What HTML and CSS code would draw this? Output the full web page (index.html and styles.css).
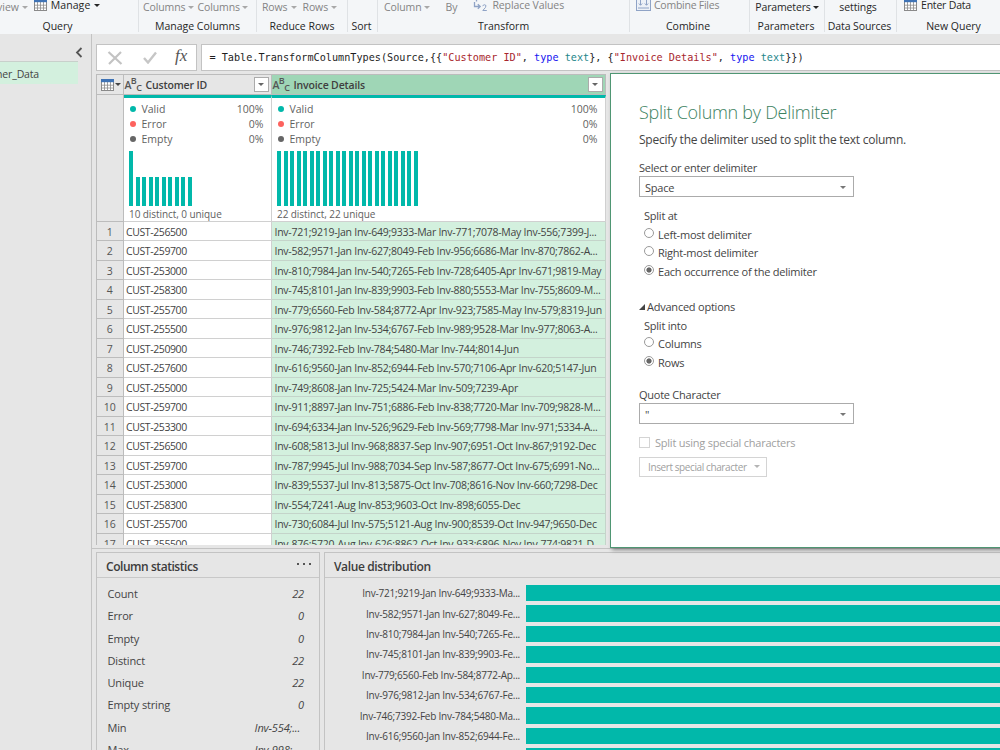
FILE: index.html
```
<!DOCTYPE html>
<html lang="en">
<head>
    <meta charset="UTF-8">
    <meta name="viewport" content="width=device-width, initial-scale=1.0">
    <title>Power Query Editor</title>
    <link rel="stylesheet" href="styles.css">
</head>
<body>
    <svg class="defs" width="0" height="0">
        <symbol id="table-icon" viewBox="0 0 13 12">
            <rect x="0.5" y="0.5" width="12" height="11" fill="#fff" stroke="#8a8a8a"/>
            <path d="M0.5 6.2H12.5M0.5 9H12.5M3.5 3V11.5M6.5 3V11.5M9.5 3V11.5" stroke="#8a8a8a" stroke-width="0.8" fill="none"/>
            <rect width="13" height="3.2" fill="#3f73b5"/>
        </symbol>
    </svg>

    <div class="ribbon">
        <div class="group g-query">
            <div class="tools"><span class="off view">view <i class="caret"></i></span><span class="tool up"><svg class="tbl"><use href="#table-icon"/></svg>Manage <i class="caret"></i></span></div>
            <div class="label">Query</div>
        </div>
        <div class="group g-columns">
            <div class="tools off"><span class="tool">Columns <i class="caret"></i></span><span class="tool">Columns <i class="caret"></i></span></div>
            <div class="label">Manage Columns</div>
        </div>
        <div class="group g-rows">
            <div class="tools off"><span class="tool">Rows <i class="caret"></i></span><span class="tool">Rows <i class="caret"></i></span></div>
            <div class="label">Reduce Rows</div>
        </div>
        <div class="group g-sort">
            <div class="tools"></div>
            <div class="label">Sort</div>
        </div>
        <div class="group g-transform">
            <div class="tools off">
                <span class="tool">Column <i class="caret"></i></span>
                <span class="tool">By</span>
                <span class="tool up">
                    <svg width="15" height="13" viewBox="0 0 15 13" fill="none" stroke="#8fa3c6"><path d="M3.5 0V2.5M1.5 3V7.5H7M4.8 5.2L7.2 7.5L4.8 9.8" stroke-width="1.3"/><path d="M9.5 6.8Q11.5 4.8 13 6.5Q13.5 8 9.8 11.5H13.8"/></svg>
                    Replace Values
                </span>
            </div>
            <div class="label">Transform</div>
        </div>
        <div class="group g-combine">
            <div class="tools off">
                <span class="tool up">
                    <svg width="15" height="13" viewBox="0 0 15 13" fill="none" stroke="#8fa3c6"><rect x="0.5" y="-3" width="14" height="14.5" fill="#edf1f7"/><path d="M4.5 0V6M2.8 4.5L4.5 6.3L6.2 4.5M10.5 0V6M8.8 4.5L10.5 6.3L12.2 4.5M2 9H13"/></svg>
                    Combine Files
                </span>
            </div>
            <div class="label">Combine</div>
        </div>
        <div class="group g-params">
            <div class="tools"><span class="tool">Parameters <i class="caret"></i></span></div>
            <div class="label">Parameters</div>
        </div>
        <div class="group g-sources">
            <div class="tools"><span class="tool">settings</span></div>
            <div class="label">Data Sources</div>
        </div>
        <div class="group g-new">
            <div class="tools"><span class="tool up"><svg class="tbl"><use href="#table-icon"/></svg>Enter Data</span></div>
            <div class="label">New Query</div>
        </div>
    </div>

    <div class="workspace">
        <div class="queries">
            <div class="collapse"><svg width="8" height="11" viewBox="0 0 8 11"><path d="M6.5 1L2 5.5L6.5 10" fill="none" stroke="#555" stroke-width="1.8"/></svg></div>
            <div class="query-item">ner_Data</div>
        </div>

        <div class="main">
            <div class="formula-row">
                <div class="formula-buttons">
                    <svg width="16" height="14" viewBox="0 0 16 14"><path d="M1.5 1L14.5 13M14 1L2 13" stroke="#c3c3c3" stroke-width="2.2"/></svg>
                    <svg width="14" height="13" viewBox="0 0 14 13"><path d="M1 7L5 11.5L13 1.5" fill="none" stroke="#c6c6c6" stroke-width="2.4"/></svg>
                    <span class="fx">fx</span>
                </div>
                <div class="formula">= Table.TransformColumnTypes(Source,{{<span class="str">"Customer ID"</span>, <span class="kw">type</span> <span class="ty">text</span>}, {<span class="str">"Invoice Details"</span>, <span class="kw">type</span> <span class="ty">text</span>}})</div>
            </div>

            <div class="grid">
                <div class="head-row">
                    <div class="corner"><svg class="tbl"><use href="#table-icon"/></svg><i class="caret"></i></div>
                    <div class="head">
                        <span class="abc">A<sup>B</sup><sub>C</sub></span><span class="name">Customer ID</span><span class="drop"><i class="caret"></i></span>
                    </div>
                    <div class="head selected">
                        <span class="abc">A<sup>B</sup><sub>C</sub></span><span class="name">Invoice Details</span><span class="drop"><i class="caret"></i></span>
                    </div>
                </div>
                <div class="profile-row">
                    <div class="num"></div>
                    <div class="profile">
                        <div class="quality"><i class="dot valid"></i>Valid<b>100%</b></div>
                        <div class="quality"><i class="dot error"></i>Error<b>0%</b></div>
                        <div class="quality"><i class="dot empty"></i>Empty<b>0%</b></div>
                        <div class="histogram"><i></i><i class="half"></i><i class="half"></i><i class="half"></i><i class="half"></i><i class="half"></i><i class="half"></i><i class="half"></i><i class="half"></i><i class="half"></i></div>
                        <div class="distinct">10 distinct, 0 unique</div>
                    </div>
                    <div class="profile">
                        <div class="quality"><i class="dot valid"></i>Valid<b>100%</b></div>
                        <div class="quality"><i class="dot error"></i>Error<b>0%</b></div>
                        <div class="quality"><i class="dot empty"></i>Empty<b>0%</b></div>
                        <div class="histogram"><i></i><i></i><i></i><i></i><i></i><i></i><i></i><i></i><i></i><i></i><i></i><i></i><i></i><i></i><i></i><i></i><i></i><i></i><i></i><i></i><i></i><i></i></div>
                        <div class="distinct">22 distinct, 22 unique</div>
                    </div>
                </div>
                <div class="row"><div class="num">1</div><div class="cell">CUST-256500</div><div class="cell inv">Inv-721;9219-Jan Inv-649;9333-Mar Inv-771;7078-May Inv-556;7399-J...</div></div>
                <div class="row"><div class="num">2</div><div class="cell">CUST-259700</div><div class="cell inv">Inv-582;9571-Jan Inv-627;8049-Feb Inv-956;6686-Mar Inv-870;7862-A...</div></div>
                <div class="row"><div class="num">3</div><div class="cell">CUST-253000</div><div class="cell inv">Inv-810;7984-Jan Inv-540;7265-Feb Inv-728;6405-Apr Inv-671;9819-May</div></div>
                <div class="row"><div class="num">4</div><div class="cell">CUST-258300</div><div class="cell inv">Inv-745;8101-Jan Inv-839;9903-Feb Inv-880;5553-Mar Inv-755;8609-M...</div></div>
                <div class="row"><div class="num">5</div><div class="cell">CUST-255700</div><div class="cell inv">Inv-779;6560-Feb Inv-584;8772-Apr Inv-923;7585-May Inv-579;8319-Jun</div></div>
                <div class="row"><div class="num">6</div><div class="cell">CUST-255500</div><div class="cell inv">Inv-976;9812-Jan Inv-534;6767-Feb Inv-989;9528-Mar Inv-977;8063-A...</div></div>
                <div class="row"><div class="num">7</div><div class="cell">CUST-250900</div><div class="cell inv">Inv-746;7392-Feb Inv-784;5480-Mar Inv-744;8014-Jun</div></div>
                <div class="row"><div class="num">8</div><div class="cell">CUST-257600</div><div class="cell inv">Inv-616;9560-Jan Inv-852;6944-Feb Inv-570;7106-Apr Inv-620;5147-Jun</div></div>
                <div class="row"><div class="num">9</div><div class="cell">CUST-255000</div><div class="cell inv">Inv-749;8608-Jan Inv-725;5424-Mar Inv-509;7239-Apr</div></div>
                <div class="row"><div class="num">10</div><div class="cell">CUST-259700</div><div class="cell inv">Inv-911;8897-Jan Inv-751;6886-Feb Inv-838;7720-Mar Inv-709;9828-M...</div></div>
                <div class="row"><div class="num">11</div><div class="cell">CUST-253300</div><div class="cell inv">Inv-694;6334-Jan Inv-526;9629-Feb Inv-569;7798-Mar Inv-971;5334-A...</div></div>
                <div class="row"><div class="num">12</div><div class="cell">CUST-256500</div><div class="cell inv">Inv-608;5813-Jul Inv-968;8837-Sep Inv-907;6951-Oct Inv-867;9192-Dec</div></div>
                <div class="row"><div class="num">13</div><div class="cell">CUST-259700</div><div class="cell inv">Inv-787;9945-Jul Inv-988;7034-Sep Inv-587;8677-Oct Inv-675;6991-No...</div></div>
                <div class="row"><div class="num">14</div><div class="cell">CUST-253000</div><div class="cell inv">Inv-839;5537-Jul Inv-813;5875-Oct Inv-708;8616-Nov Inv-660;7298-Dec</div></div>
                <div class="row"><div class="num">15</div><div class="cell">CUST-258300</div><div class="cell inv">Inv-554;7241-Aug Inv-853;9603-Oct Inv-898;6055-Dec</div></div>
                <div class="row"><div class="num">16</div><div class="cell">CUST-255700</div><div class="cell inv">Inv-730;6084-Jul Inv-575;5121-Aug Inv-900;8539-Oct Inv-947;9650-Dec</div></div>
                <div class="row"><div class="num">17</div><div class="cell">CUST-255500</div><div class="cell inv">Inv-876;5720-Aug Inv-626;8862-Oct Inv-933;6896-Nov Inv-774;9821-D...</div></div>
            </div>

            <div class="panels">
                <div class="panel stats">
                    <div class="panel-title">Column statistics<span class="more"><i></i><i></i><i></i></span></div>
                    <div class="stat"><span>Count</span><em>22</em></div>
                    <div class="stat"><span>Error</span><em>0</em></div>
                    <div class="stat"><span>Empty</span><em>0</em></div>
                    <div class="stat"><span>Distinct</span><em>22</em></div>
                    <div class="stat"><span>Unique</span><em>22</em></div>
                    <div class="stat"><span>Empty string</span><em>0</em></div>
                    <div class="stat"><span>Min</span><em class="long">Inv-554;...</em></div>
                    <div class="stat"><span>Max</span><em class="long">Inv-998;...</em></div>
                </div>
                <div class="panel distribution">
                    <div class="panel-title">Value distribution</div>
                    <div class="bar-row"><span>Inv-721;9219-Jan Inv-649;9333-Ma...</span><i></i></div>
                    <div class="bar-row"><span>Inv-582;9571-Jan Inv-627;8049-Fe...</span><i></i></div>
                    <div class="bar-row"><span>Inv-810;7984-Jan Inv-540;7265-Fe...</span><i></i></div>
                    <div class="bar-row"><span>Inv-745;8101-Jan Inv-839;9903-Fe...</span><i></i></div>
                    <div class="bar-row"><span>Inv-779;6560-Feb Inv-584;8772-Ap...</span><i></i></div>
                    <div class="bar-row"><span>Inv-976;9812-Jan Inv-534;6767-Fe...</span><i></i></div>
                    <div class="bar-row"><span>Inv-746;7392-Feb Inv-784;5480-Ma...</span><i></i></div>
                    <div class="bar-row"><span>Inv-616;9560-Jan Inv-852;6944-Fe...</span><i></i></div>
                    <div class="bar-row"><span></span><i></i></div>
                </div>
            </div>
        </div>
    </div>

    <div class="dialog">
        <h1>Split Column by Delimiter</h1>
        <p class="intro">Specify the delimiter used to split the text column.</p>
        <div class="field-label">Select or enter delimiter</div>
        <div class="select">Space<i class="caret"></i></div>
        <div class="options split-at">
            <div class="option title">Split at</div>
            <div class="option"><i class="radio"></i>Left-most delimiter</div>
            <div class="option"><i class="radio"></i>Right-most delimiter</div>
            <div class="option"><i class="radio checked"></i>Each occurrence of the delimiter</div>
        </div>
        <div class="advanced"><svg width="6" height="6" viewBox="0 0 6 6"><path d="M6 0V6H0Z" fill="#444"/></svg>Advanced options</div>
        <div class="options">
            <div class="option title">Split into</div>
            <div class="option"><i class="radio"></i>Columns</div>
            <div class="option"><i class="radio checked"></i>Rows</div>
        </div>
        <div class="field-label quote-label">Quote Character</div>
        <div class="select">"<i class="caret"></i></div>
        <div class="check"><i class="box"></i>Split using special characters</div>
        <div class="insert">Insert special character<i class="caret"></i></div>
    </div>
</body>
</html>
```
FILE: styles.css
```
* {
    box-sizing: border-box;
}
body {
    margin: 0;
    width: 1000px;
    height: 750px;
    overflow: hidden;
    background: #e6e6e6;
    color: #444;
    font-family: "Open Sans", "Noto Sans", sans-serif;
    font-size: 10.5px;
    white-space: nowrap;
    position: relative;
}
i {
    font-style: normal;
}
.defs {
    position: absolute;
}
.tbl {
    width: 13px;
    height: 12px;
    flex: none;
}
.caret {
    display: inline-block;
    flex: none;
    border: 3px solid transparent;
    border-top: 3.5px solid currentColor;
    border-bottom: 0;
    vertical-align: 2px;
}

/* ribbon */
.ribbon {
    display: flex;
    height: 34px;
    background: #f4f6f8;
    color: #262626;
    overflow: hidden;
}
.group {
    flex: none;
    display: flex;
    flex-direction: column;
    border-right: 1px solid #dfe2e5;
    height: 32px;
}
.tools {
    display: flex;
    justify-content: center;
    height: 16px;
    flex: none;
    line-height: 15px;
    gap: 4px;
}
.off {
    color: #848484;
}
.off .caret {
    color: #a8a8a8;
}
.tool {
    display: flex;
    align-items: center;
    gap: 2px;
    height: 15px;
    letter-spacing: -0.1px;
}
.tool.up {
    height: 10px;
    gap: 4px;
}
.label {
    flex: none;
    height: 20px;
    line-height: 21px;
    text-align: center;
}
.g-query { width: 139px; }
.g-query .tools { justify-content: flex-start; gap: 6px; }
.g-query .up { letter-spacing: 0.1px; }
.g-query .label { padding-right: 23px; }
.view { margin-left: -3px; }
.g-columns { width: 118px; }
.g-columns .tools { padding-right: 4px; }
.g-rows { width: 91px; }
.g-rows .tools { padding-right: 5px; gap: 6px; }
.g-rows .tool { gap: 3px; }
.g-sort { width: 30px; }
.g-sort .label { padding-right: 2px; }
.g-transform { width: 252px; }
.g-transform .tools { justify-content: flex-start; gap: 16px; padding-left: 6px; }
.g-combine { width: 120px; }
.g-combine .label { padding-right: 3px; }
.g-combine .tools { justify-content: flex-start; padding-left: 6px; }
.g-combine .up { letter-spacing: -0.25px; gap: 3px; }
.g-params { width: 75px; }
.g-params .label { padding-right: 2px; }
.g-params .tool { letter-spacing: -0.15px; }
.g-sources { width: 72px; }
.g-sources .label { letter-spacing: -0.1px; padding-right: 2px; }
.g-sources .tools { padding-right: 5px; }
.g-new { width: 120px; border: 0; }
.g-new .tools { justify-content: flex-start; padding-left: 7px; }
.g-new .up { letter-spacing: -0.2px; }
.g-new .label { padding-right: 7px; }

/* left pane */
.workspace {
    display: flex;
    height: 716px;
}
.queries {
    width: 92px;
    flex: none;
    border-right: 1px solid #c3c3c3;
}
.collapse {
    height: 27px;
    padding: 13px 8px 0 0;
    text-align: right;
    line-height: 0;
}
.query-item {
    width: 78px;
    height: 23px;
    line-height: 25px;
    border-top: 1px solid #c8d0cb;
    background: #d3f0de;
    text-indent: -4px;
    letter-spacing: -0.15px;
}

.main {
    flex: 1;
    min-width: 0;
    padding: 10px 0 0 4px;
}

/* formula bar */
.formula-row {
    display: flex;
    gap: 4px;
    height: 27px;
}
.formula-buttons,
.formula {
    border: 1px solid #c3c3c3;
    background: #fff;
}
.formula-buttons {
    width: 101px;
    display: flex;
    align-items: center;
    padding-left: 10px;
    gap: 20px;
}
.fx {
    font: italic 17px "Liberation Serif", serif;
    color: #555;
    margin: -3px 0 0 -2px;
}
.formula {
    flex: 1;
    border-right: 0;
    padding-left: 7.5px;
    line-height: 26px;
    font-family: "DejaVu Sans Mono", monospace;
    font-size: 10.18px;
    color: #1e1e1e;
}
.str { color: #a8262c; }
.kw { color: #1414f0; }
.ty { color: #23868a; }

/* data preview */
.grid {
    margin-top: 3px;
    width: 510px;
    height: 471px;
    overflow: hidden;
}
.head-row,
.profile-row,
.row {
    display: grid;
    grid-template-columns: 27.5px 148px 334px;
    grid-template-rows: 100%;
}
.head-row {
    height: 21px;
}
.head,
.corner {
    display: flex;
    align-items: center;
    border: 1px solid #bcbcbc;
    border-left: 0;
    background: #e6e6e6;
}
.corner {
    border-left: 1px solid #bcbcbc;
    padding-left: 4px;
    gap: 1px;
}
.head.selected {
    background: #9fd6b6;
}
.head {
    padding: 0 2px 0 1px;
    font-weight: 600;
    letter-spacing: -0.15px;
    color: #3f3f3f;
}
.abc {
    display: flex;
    align-items: flex-start;
    width: 21px;
    font-size: 10.5px;
    line-height: 12px;
    height: 12px;
    letter-spacing: -0.6px;
    color: #555;
}
.abc sup,
.abc sub {
    font-size: 9px;
    line-height: 12px;
    vertical-align: baseline;
}
.abc sup { margin-top: -4px; }
.abc sub { margin-top: 3px; }
.drop {
    margin-left: auto;
    width: 15px;
    height: 15px;
    display: flex;
    align-items: center;
    justify-content: center;
    background: #fff;
    border: 1px solid #ababab;
    color: #666;
}
.profile-row {
    height: 127px;
}
.profile {
    background: #fff;
    border-top: 3px solid #01b8aa;
    border-right: 1px solid #d0d0d0;
    border-bottom: 1px solid #d0d0d0;
    padding: 3px 7px 0 5.5px;
    color: #5f5f5f;
}
.num {
    border: 1px solid #bcbcbc;
    border-top: 0;
    text-align: center;
    color: #555;
}
.quality {
    display: flex;
    align-items: center;
    height: 15px;
}
.quality b {
    margin-left: auto;
    font-weight: 400;
}
.dot {
    width: 6px;
    height: 6px;
    border-radius: 3px;
    margin: 0 5.5px 0 1px;
}
.valid { background: #01b8aa; }
.error { background: #fd625e; }
.empty { background: #666; }
.histogram {
    display: flex;
    align-items: flex-end;
    gap: 2.5px;
    height: 55px;
    margin-top: 5px;
}
.histogram i {
    width: 4px;
    height: 55px;
    background: #01b8aa;
}
.histogram i.half {
    height: 29px;
}
.distinct {
    line-height: 17px;
    font-size: 10px;
    letter-spacing: -0.07px;
}
.row {
    height: 19.47px;
    line-height: 20.5px;
}
.cell {
    background: #fff;
    border-right: 1px solid #d0d0d0;
    border-bottom: 1px solid #d0d0d0;
    padding-left: 2.5px;
    overflow: hidden;
    letter-spacing: -0.4px;
}
.inv {
    background: #d3f0de;
    border-color: #c4d4ca;
    padding-left: 3px;
    letter-spacing: -0.25px;
}

/* bottom panels */
.panels {
    display: flex;
    gap: 4px;
    height: 203px;
    margin: 3px 0 0 -4px;
    padding: 3px 0 0 4px;
    border-top: 1px solid #c3c3c3;
}
.panel {
    border: 1px solid #c3c3c3;
    border-bottom: 0;
    overflow: hidden;
}
.stats {
    width: 224px;
}
.distribution {
    flex: 1;
    border-right: 0;
}
.panel-title {
    display: flex;
    align-items: center;
    height: 25px;
    border-bottom: 1px solid #c8c8c8;
    padding: 3px 8px 0 9px;
    font-size: 12px;
    font-weight: 600;
    letter-spacing: -0.38px;
    color: #3c3c3c;
    margin-bottom: 5px;
}
.stats .panel-title {
    letter-spacing: -0.45px;
}
.more {
    display: flex;
    gap: 4px;
    margin: -6px 0 0 auto;
}
.more i {
    width: 2px;
    height: 2px;
    background: #555;
}
.stat {
    display: flex;
    justify-content: space-between;
    height: 22.3px;
    line-height: 22px;
    padding: 0 15px 0 10.5px;
    font-size: 11px;
    letter-spacing: -0.15px;
}
.stat .long {
    padding-right: 4px;
}
.bar-row {
    display: flex;
    align-items: center;
    gap: 6px;
    height: 20.4px;
}
.bar-row span {
    width: 195px;
    text-align: right;
    font-size: 10px;
    letter-spacing: -0.22px;
}
.bar-row i {
    flex: 1;
    height: 16.5px;
    background: #01b8aa;
}

/* modal on top of the preview */
.dialog {
    position: absolute;
    left: 610px;
    top: 73px;
    width: 400px;
    height: 475px;
    border: 1.5px solid #4f9673;
    background: #fff;
    padding: 25px 28px 0;
    box-shadow: 2px 2px 4px rgba(0, 0, 0, 0.4);
    font-size: 11px;
    letter-spacing: -0.23px;
}
.dialog .caret {
    color: #777;
}
.dialog h1 {
    margin: 0;
    height: 26px;
    line-height: 26px;
    font-size: 18px;
    font-weight: 300;
    letter-spacing: -0.28px;
    color: #3c8261;
}
.intro {
    margin: 5px 0 0;
    height: 20px;
    line-height: 20px;
    font-size: 12px;
    letter-spacing: -0.25px;
}
.field-label {
    margin-top: 10px;
    height: 16px;
    line-height: 16px;
    letter-spacing: -0.22px;
}
.select {
    width: 215px;
    height: 21px;
    border: 1px solid #ababab;
    display: flex;
    align-items: center;
    justify-content: space-between;
    padding: 2px 7px 0 5px;
}
.options {
    padding-left: 5px;
}
.split-at {
    margin-top: 9px;
}
.option {
    display: flex;
    align-items: center;
    height: 18.7px;
}
.radio {
    width: 10px;
    height: 10px;
    border: 1px solid #9a9a9a;
    border-radius: 50%;
    margin: -3px 4px 0 0;
}
.checked {
    background: radial-gradient(circle, #666 0 2.2px, #fff 3px);
}
.advanced {
    display: flex;
    align-items: center;
    gap: 2px;
    height: 18px;
    margin-top: 17px;
}
.quote-label {
    margin-top: 15px;
    letter-spacing: -0.25px;
}
.check {
    display: flex;
    align-items: center;
    height: 20px;
    margin-top: 9px;
    color: #a0a0a0;
}
.box {
    width: 11px;
    height: 11px;
    border: 1px solid #d4d4d4;
    margin-right: 5px;
}
.insert {
    display: flex;
    align-items: center;
    justify-content: space-between;
    width: 128px;
    height: 20px;
    margin-top: 4px;
    border: 1px solid #d4d4d4;
    padding: 0 6px 0 8px;
    font-size: 10px;
    letter-spacing: -0.4px;
    color: #a0a0a0;
}
.insert .caret {
    color: #b4b4b4;
}
```
